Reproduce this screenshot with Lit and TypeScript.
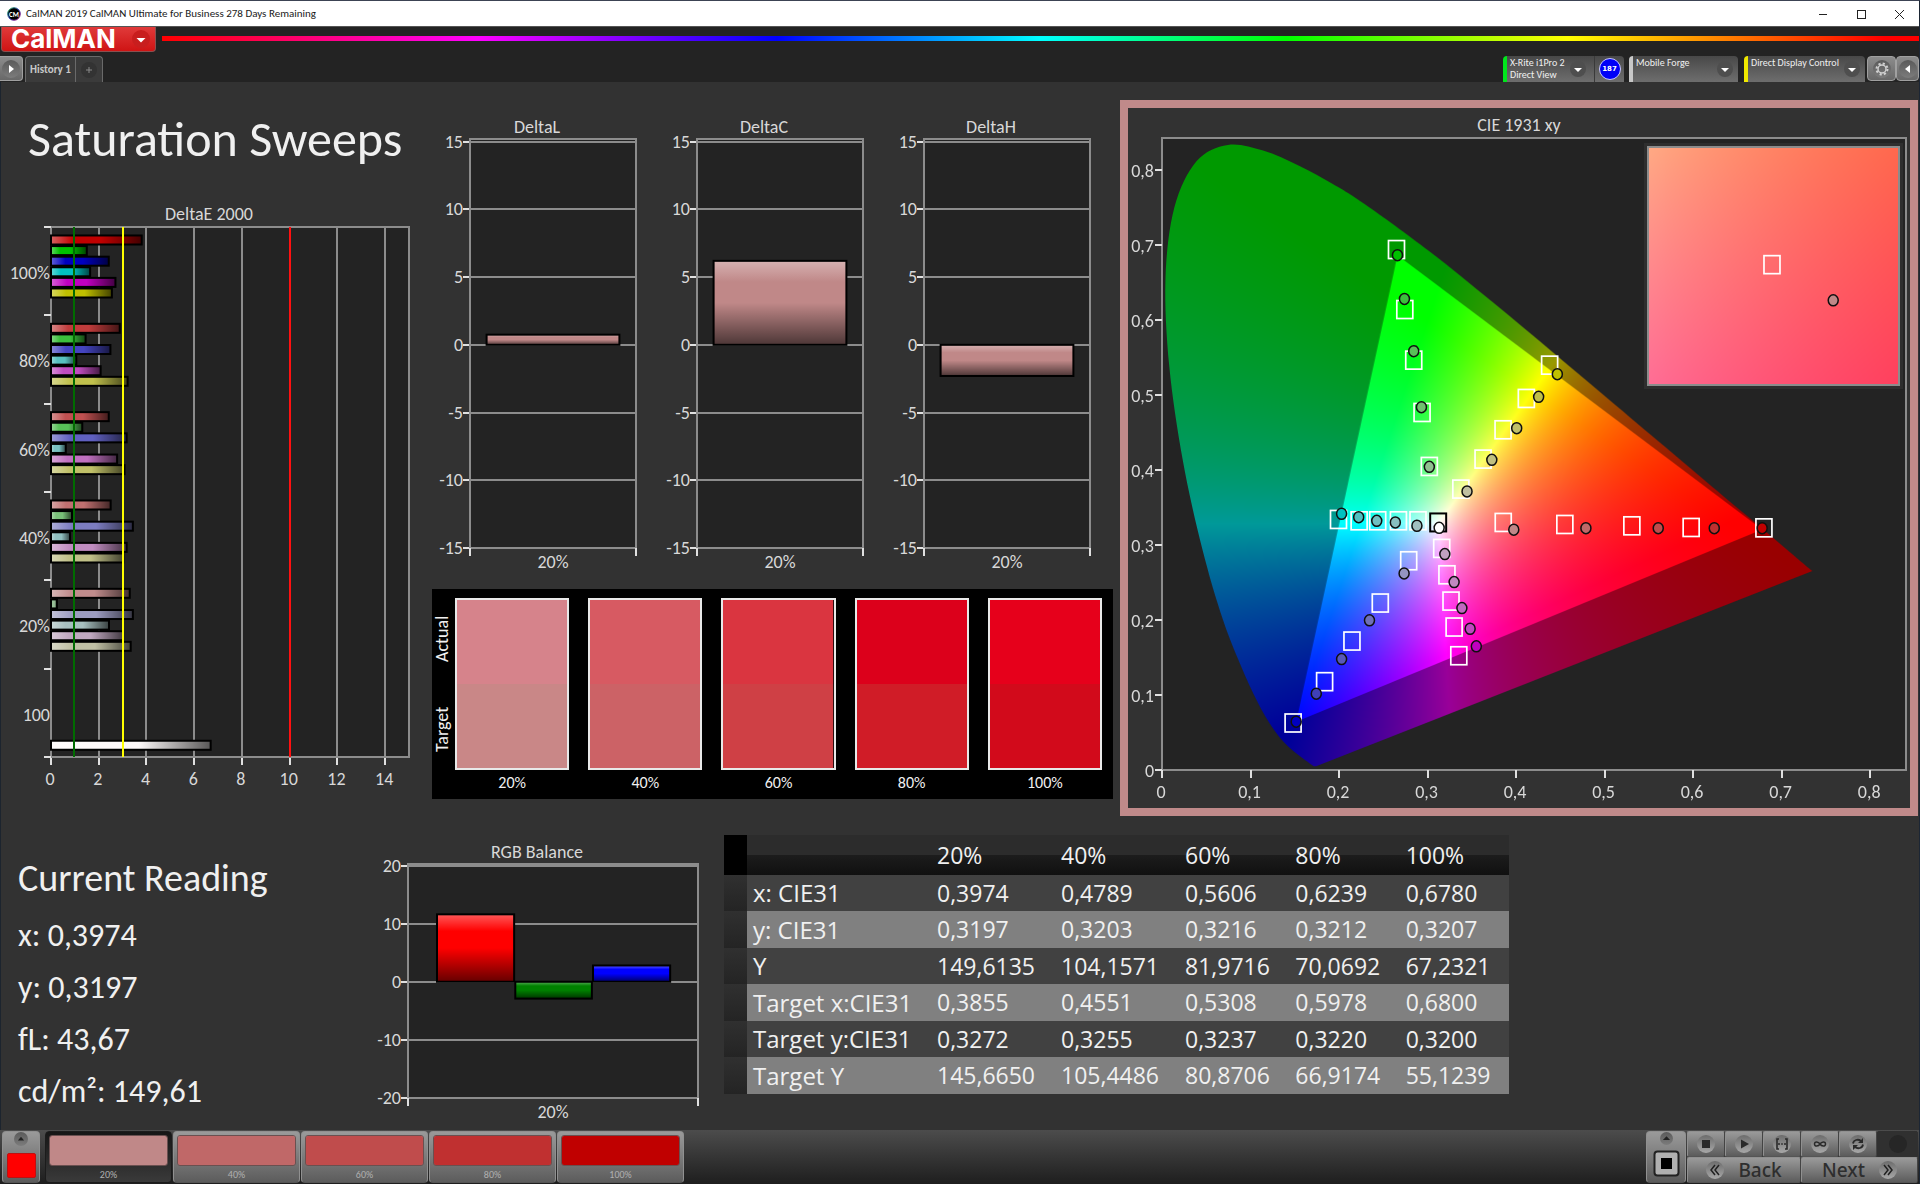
import { LitElement, html, svg, css } from "lit";
import { customElement, property } from "lit/decorators.js";

type Pair = [number, number];

const LEVELS = ["20%", "40%", "60%", "80%", "100%"];
const RED_TINTS = ["#c08888", "#c06868", "#c04c4c", "#c03030", "#c00000"];
const pc = (value: number, span: number) => `${(value / span) * 100}%`;

const chartStyles = css`
  svg.plot {
    display: block;
    width: 100%;
    height: 100%;
    overflow: visible;
  }
  .title {
    margin: 0;
    font-size: 18px;
    line-height: 22px;
    font-weight: 400;
    text-align: center;
    color: #d8d8d8;
  }
  .field {
    fill: #232323;
  }
  .grid,
  .frame {
    stroke: #8c8c8c;
    stroke-width: 2;
    fill: none;
    shape-rendering: crispEdges;
  }
  .tick {
    stroke: #e0e0e0;
    stroke-width: 2;
    shape-rendering: crispEdges;
  }
  .bar {
    stroke: #000;
    stroke-width: 2;
  }
  text {
    fill: #d8d8d8;
    font-size: 18px;
    dominant-baseline: central;
  }
  .end {
    text-anchor: end;
  }
  .mid {
    text-anchor: middle;
  }
`;

interface Bar {
  from: number;
  to: number;
  value: number;
  color: string;
}

/* Vertical bar chart with a symmetric value axis. */
@customElement("value-chart")
export class ValueChart extends LitElement {
  @property() heading = "";
  @property({ type: Number }) limit = 15;
  @property({ type: Number }) step = 5;
  @property({ attribute: false }) bars: Bar[] = [];

  static styles = [
    chartStyles,
    css`
      :host {
        display: flex;
        flex-direction: column;
        min-width: 0;
      }
      .area {
        flex: 1;
        min-height: 0;
        padding: 1px 0 27px 32px;
      }
    `,
  ];

  render() {
    const top = this.limit * 1.013;
    const span = top + this.limit;
    const y = (v: number) => pc(top - v, span);
    const ticks: number[] = [];
    for (let v = this.limit; v >= -this.limit; v -= this.step) ticks.push(v);
    return html`
      <h3 class="title">${this.heading}</h3>
      <div class="area">
        <svg class="plot" role="img" aria-label=${this.heading}>
          <defs>
            <linearGradient id="shade" x1="0" y1="0" x2="0" y2="1">
              <stop offset="0" stop-color="#fff" stop-opacity="0.35" />
              <stop offset="0.25" stop-color="#fff" stop-opacity="0" />
              <stop offset="0.5" stop-color="#000" stop-opacity="0" />
              <stop offset="1" stop-color="#000" stop-opacity="0.6" />
            </linearGradient>
          </defs>
          <rect class="field" width="100%" height="100%" />
          ${ticks.map(
            (v) => svg`
              <line class="grid" x1="0" x2="100%" y1=${y(v)} y2=${y(v)} />
              <line class="tick" x1="-7" x2="0" y1=${y(v)} y2=${y(v)} />
              <text class="end" x="-7" y=${y(v)}>${v}</text>`
          )}
          <rect class="frame" width="100%" height="100%" />
          ${this.bars.map((b) => {
            const a = y(Math.max(b.value, 0));
            const h = pc(Math.abs(b.value), span);
            const w = `${b.to - b.from}%`;
            return svg`
              <rect x="${b.from}%" y=${a} width=${w} height=${h} fill=${b.color} />
              <rect class="bar" x="${b.from}%" y=${a} width=${w} height=${h} fill="url(#shade)" />`;
          })}
          <svg y="100%" class="plot">
            <line class="tick" x1="0" x2="0" y1="0" y2="8" />
            <line class="tick" x1="100%" x2="100%" y1="0" y2="8" />
            <text class="mid" x="50%" y="14">20%</text>
          </svg>
        </svg>
      </div>
    `;
  }
}

const SWEEPS: { label: string; colors: string[]; values: number[] }[] = [
  {
    label: "100%",
    colors: ["#c00000", "#00c000", "#0000c0", "#00c0c0", "#c000c0", "#c0c000"],
    values: [3.8, 1.5, 2.42, 1.64, 2.7, 2.55],
  },
  {
    label: "80%",
    colors: ["#c03c3c", "#3cc03c", "#4444c0", "#58c0c0", "#c04cc0", "#c0c04c"],
    values: [2.88, 1.45, 2.49, 1.06, 2.08, 3.21],
  },
  {
    label: "60%",
    colors: ["#c05050", "#58c058", "#6060c0", "#78c0c0", "#c070c0", "#c0c068"],
    values: [2.42, 1.31, 3.17, 0.62, 2.77, 3.08],
  },
  {
    label: "40%",
    colors: ["#c07070", "#78c078", "#7c7cc0", "#90c0c0", "#c08cc0", "#c0c088"],
    values: [2.5, 0.88, 3.43, 0.8, 3.17, 3.03],
  },
  {
    label: "20%",
    colors: ["#c08c8c", "#98c098", "#9c9cc0", "#a8c0c0", "#c0a8c0", "#c0c0a4"],
    values: [3.3, 0.25, 3.43, 2.43, 3.02, 3.34],
  },
];

/* Horizontal DeltaE bars, one band per saturation level plus the white level. */
@customElement("delta-e-chart")
export class DeltaEChart extends LitElement {
  static styles = [
    chartStyles,
    css`
      :host {
        display: flex;
        flex-direction: column;
      }
      .title {
        padding-left: 8px;
      }
      .area {
        height: 530px;
        padding: 2px 0 34px 50px;
      }
      .limit {
        shape-rendering: crispEdges;
        stroke-width: 2;
      }
      .good {
        stroke: #006c00;
      }
      .warn {
        stroke: #ffff00;
      }
      .bad {
        stroke: #ff1010;
      }
    `,
  ];

  render() {
    const band = 100 / 6;
    const x = (v: number) => pc(v, 15);
    const bar = (b: number, slot: number, v: number, color: string) => {
      const top = `${band * b + 1.6 + slot * 2}%`;
      return svg`
        <rect y=${top} width=${x(v)} height="1.7%" fill=${color} />
        <rect class="bar" y=${top} width=${x(v)} height="1.7%" fill="url(#shade)" />`;
    };
    return html`
      <h3 class="title">DeltaE 2000</h3>
      <div class="area">
        <svg class="plot" role="img" aria-label="DeltaE 2000">
          <defs>
            <linearGradient id="shade">
              <stop offset="0" stop-color="#fff" stop-opacity="0.38" />
              <stop offset="0.25" stop-color="#fff" stop-opacity="0" />
              <stop offset="0.55" stop-color="#000" stop-opacity="0" />
              <stop offset="1" stop-color="#000" stop-opacity="0.65" />
            </linearGradient>
          </defs>
          <rect class="field" width="100%" height="100%" />
          ${[0, 2, 4, 6, 8, 10, 12, 14].map(
            (v) => svg`
              <line class="grid" x1=${x(v)} x2=${x(v)} y1="0" y2="100%" />
              <svg class="plot" x=${x(v)} y="100%">
                <line class="tick" x1="0" x2="0" y1="0" y2="8" />
                <text class="mid" x="-1" y="22">${v}</text>
              </svg>`
          )}
          <rect class="frame" width="100%" height="100%" />
          ${[0, 1, 2, 3, 4, 5, 6].map(
            (i) => svg`<line class="tick" x1="-7" x2="0" y1="${band * i}%" y2="${band * i}%" />`
          )}
          ${SWEEPS.map(
            (s, b) => svg`
              <text class="end" x="-1" y="${band * (b + 0.52)}%">${s.label}</text>
              ${s.values.map((v, i) => bar(b, i, v, s.colors[i]))}`
          )}
          <text class="end" x="-1" y="${band * 5.52}%">100</text>
          ${bar(5, 6, 6.69, "#fcf8f8")}
          <line class="limit good" x1=${x(0.97)} x2=${x(0.97)} y1="0" y2="100%" />
          <line class="limit warn" x1=${x(3)} x2=${x(3)} y1="0" y2="100%" />
          <line class="limit bad" x1=${x(10)} x2=${x(10)} y1="0" y2="100%" />
        </svg>
      </div>
    `;
  }
}

const LOCUS: Pair[] = [
  [0.1741, 0.005], [0.1714, 0.0051], [0.1689, 0.0069], [0.1644, 0.0109], [0.1566, 0.0177],
  [0.144, 0.0297], [0.1355, 0.0399], [0.1241, 0.0578], [0.1096, 0.0868], [0.0913, 0.1327],
  [0.0687, 0.2007], [0.0454, 0.295], [0.0235, 0.4127], [0.0082, 0.5384], [0.0039, 0.6548],
  [0.0139, 0.7502], [0.0389, 0.812], [0.0743, 0.8338], [0.1142, 0.8262], [0.1547, 0.8059],
  [0.1929, 0.7816], [0.2296, 0.7543], [0.3016, 0.6923], [0.3731, 0.6245], [0.4441, 0.5547],
  [0.5125, 0.4866], [0.5752, 0.4242], [0.627, 0.3725], [0.6658, 0.334], [0.6915, 0.3083],
  [0.719, 0.2809], [0.7347, 0.2653],
];
const GAMUT: Pair[] = [[0.678, 0.3207], [0.266, 0.6867], [0.1516, 0.0644]];

interface Sweep {
  targets: Pair[];
  readings: Pair[];
  colors: string[];
}

const CIE_SWEEPS: Sweep[] = [
  {
    targets: [[0.3855, 0.3302], [0.4551, 0.3275], [0.5308, 0.3257], [0.5978, 0.3235], [0.68, 0.323]],
    readings: [[0.3974, 0.3205], [0.4789, 0.3225], [0.5606, 0.3225], [0.6239, 0.3225], [0.678, 0.3225]],
    colors: RED_TINTS,
  },
  {
    targets: [[0.302, 0.4049], [0.2938, 0.4769], [0.2844, 0.5467], [0.2743, 0.6142], [0.2649, 0.6942]],
    readings: [[0.302, 0.4044], [0.2931, 0.484], [0.2844, 0.5587], [0.2739, 0.6284], [0.266, 0.6867]],
    colors: ["#90c090", "#70c070", "#58c058", "#3cc03c", "#00c000"],
  },
  {
    targets: [[0.2787, 0.2791], [0.2466, 0.2227], [0.2146, 0.172], [0.1837, 0.1178], [0.1481, 0.0627]],
    readings: [[0.2735, 0.2622], [0.2344, 0.1996], [0.2029, 0.148], [0.1743, 0.1018], [0.1516, 0.0644]],
    colors: ["#9494c0", "#7070b8", "#5858b8", "#4040b8", "#0000c0"],
  },
  {
    targets: [[0.2892, 0.3324], [0.2671, 0.3324], [0.2437, 0.3324], [0.2227, 0.3324], [0.1994, 0.3342]],
    readings: [[0.288, 0.3258], [0.2636, 0.3302], [0.2426, 0.3324], [0.2222, 0.3373], [0.2029, 0.3418]],
    colors: ["#a0c0c0", "#88c0c0", "#70c0c0", "#50c0c0", "#00c0c0"],
  },
  {
    targets: [[0.316, 0.2956], [0.3219, 0.2604], [0.3265, 0.2253], [0.33, 0.1907], [0.3353, 0.1524]],
    readings: [[0.3195, 0.288], [0.33, 0.2507], [0.3388, 0.216], [0.3481, 0.1884], [0.3551, 0.1649]],
    colors: ["#c0a0c0", "#c088c0", "#c068c0", "#c048c0", "#c000c0"],
  },
  {
    targets: [[0.3376, 0.3747], [0.3627, 0.4147], [0.3853, 0.4538], [0.4116, 0.4956], [0.4379, 0.54]],
    readings: [[0.3446, 0.3716], [0.3726, 0.4138], [0.4007, 0.456], [0.4255, 0.4978], [0.4466, 0.528]],
    colors: ["#c0c0a0", "#c0c080", "#c0c068", "#c0c048", "#c0c000"],
  },
];

const X_MAX = 0.8405;
const Y_MAX = 0.843;

/* Linear display colour of a chromaticity, scaled so its largest channel is full. */
function chroma(x: number, y: number): [number, number, number] {
  const z = 1 - x - y;
  const r = Math.max(0, 3.2406 * x - 1.5372 * y - 0.4986 * z);
  const g = Math.max(0, -0.9689 * x + 1.8758 * y + 0.0415 * z);
  const b = Math.max(0, 0.0557 * x - 0.204 * y + 1.057 * z);
  const k = 255 / Math.max(r, g, b, 0.0001);
  return [r * k, g * k, b * k];
}

/* CIE 1931 chromaticity diagram with target squares and reading dots. */
@customElement("cie-chart")
export class CieChart extends LitElement {
  static styles = [
    chartStyles,
    css`
      :host {
        display: block;
        border: 8px solid #c08a8a;
        background: #323232;
      }
      .title {
        padding-top: 6px;
      }
      .area {
        padding: 2px 4px 38px 34px;
      }
      .stack {
        position: relative;
        display: grid;
        height: 632px;
        background: #232323;
      }
      .stack > * {
        grid-area: 1 / 1;
        min-width: 0;
        min-height: 0;
      }
      canvas {
        display: block;
        width: 100%;
        height: 100%;
      }
      .inset {
        position: absolute;
        top: 8px;
        right: 6px;
        width: 34%;
        height: 38%;
        box-sizing: border-box;
        display: grid;
        border: 2px solid #8c8c8c;
        outline: 3px solid #2e2e2e;
      }
      .inset > * {
        grid-area: 1 / 1;
        min-width: 0;
        min-height: 0;
      }
      .target {
        fill: none;
        stroke: #fff;
        stroke-width: 1.7;
      }
      .dark {
        stroke: #000;
        stroke-width: 2;
      }
      .reading {
        stroke: #101010;
        stroke-width: 1.5;
      }
    `,
  ];

  firstUpdated() {
    const main = this.renderRoot.querySelector<HTMLCanvasElement>(".diagram")!;
    this.paint(main, 0, X_MAX, 0, Y_MAX, true);
    const inset = this.renderRoot.querySelector<HTMLCanvasElement>(".closeup")!;
    this.paint(inset, 0.3612, 0.41, 0.302, 0.352, false);
  }

  private paint(el: HTMLCanvasElement, x0: number, x1: number, y0: number, y1: number, masked: boolean) {
    const w = el.width;
    const h = el.height;
    const layer = (dim: number) => {
      const c = document.createElement("canvas");
      c.width = w;
      c.height = h;
      const ctx = c.getContext("2d")!;
      const img = ctx.createImageData(w, h);
      for (let j = 0; j < h; j++) {
        for (let i = 0; i < w; i++) {
          const rgb = chroma(x0 + ((i + 0.5) / w) * (x1 - x0), y1 - ((j + 0.5) / h) * (y1 - y0));
          const o = (j * w + i) * 4;
          for (let n = 0; n < 3; n++) img.data[o + n] = rgb[n] * dim;
          img.data[o + 3] = 255;
        }
      }
      ctx.putImageData(img, 0, 0);
      return c;
    };
    const ctx = el.getContext("2d")!;
    if (!masked) {
      ctx.drawImage(layer(1), 0, 0);
      return;
    }
    const at = ([x, y]: Pair): Pair => [((x - x0) / (x1 - x0)) * w, ((y1 - y) / (y1 - y0)) * h];
    const p = LOCUS.map(at);
    ctx.save();
    ctx.beginPath();
    ctx.moveTo(...p[0]);
    for (let i = 0; i < p.length - 1; i++) {
      const a = p[Math.max(i - 1, 0)];
      const b = p[i];
      const c = p[i + 1];
      const d = p[Math.min(i + 2, p.length - 1)];
      ctx.bezierCurveTo(
        b[0] + (c[0] - a[0]) / 6, b[1] + (c[1] - a[1]) / 6,
        c[0] - (d[0] - b[0]) / 6, c[1] - (d[1] - b[1]) / 6,
        c[0], c[1]
      );
    }
    ctx.closePath();
    ctx.clip();
    ctx.drawImage(layer(0.6), 0, 0);
    const [r, g, b] = GAMUT.map(at);
    ctx.beginPath();
    ctx.moveTo(...r);
    ctx.lineTo(...g);
    ctx.lineTo(...b);
    ctx.closePath();
    ctx.clip();
    ctx.drawImage(layer(1), 0, 0);
    ctx.restore();
  }

  private square([x, y]: Pair, dark = false) {
    return svg`<svg class="plot" x=${pc(x, X_MAX)} y=${pc(Y_MAX - y, Y_MAX)}>
      <rect class=${dark ? "target dark" : "target"} x="-8" y="-9" width="16" height="18" /></svg>`;
  }

  private dot([x, y]: Pair, color: string) {
    return svg`<svg class="plot" x=${pc(x, X_MAX)} y=${pc(Y_MAX - y, Y_MAX)}>
      <ellipse class="reading" rx="5" ry="5.5" fill=${color} /></svg>`;
  }

  render() {
    const steps = [0, 1, 2, 3, 4, 5, 6, 7, 8];
    const name = (n: number) => (n === 0 ? "0" : `0,${n}`);
    return html`
      <h3 class="title">CIE 1931 xy</h3>
      <div class="area">
        <div class="stack">
          <canvas class="diagram" width="745" height="632"></canvas>
          <svg class="plot" role="img" aria-label="CIE 1931 xy">
            <rect class="frame" width="100%" height="100%" />
            ${steps.map(
              (n) => svg`
                <svg class="plot" x=${pc(n / 10, X_MAX)} y="100%">
                  <line class="tick" x1="0" x2="0" y1="0" y2="8" />
                  <text class="mid" x="-1" y="22">${name(n)}</text>
                </svg>
                <svg class="plot" y=${pc(Y_MAX - n / 10, Y_MAX)}>
                  <line class="tick" x1="-7" x2="0" y1="0" y2="0" />
                  <text class="end" x="-8" y="1">${name(n)}</text>
                </svg>`
            )}
            ${this.square([0.312, 0.3302], true)}
            ${CIE_SWEEPS.map((s) => s.targets.map((t) => this.square(t)))}
            ${CIE_SWEEPS.map((s) => s.readings.map((r, i) => this.dot(r, s.colors[i])))}
            ${this.dot([0.3131, 0.3231], "#ffffff")}
          </svg>
          <div class="inset">
            <canvas class="closeup" width="250" height="236"></canvas>
            <svg class="plot">
              <svg class="plot" x="49.4%" y="49.4%">
                <rect class="target" x="-8" y="-9" width="16" height="18" />
              </svg>
              <svg class="plot" x="74%" y="64.5%">
                <ellipse class="reading" rx="5" ry="5.5" fill="#c08888" />
              </svg>
            </svg>
          </div>
        </div>
      </div>
    `;
  }
}

const COMPARE = [
  { actual: "#d6838b", target: "#c98787" },
  { actual: "#d75a62", target: "#cc6266" },
  { actual: "#da3540", target: "#cf4045" },
  { actual: "#dc001b", target: "#d01c27" },
  { actual: "#e6001b", target: "#d20a1b" },
];

const TABLE: { name: string; values: string[] }[] = [
  { name: "x: CIE31", values: ["0,3974", "0,4789", "0,5606", "0,6239", "0,6780"] },
  { name: "y: CIE31", values: ["0,3197", "0,3203", "0,3216", "0,3212", "0,3207"] },
  { name: "Y", values: ["149,6135", "104,1571", "81,9716", "70,0692", "67,2321"] },
  { name: "Target x:CIE31", values: ["0,3855", "0,4551", "0,5308", "0,5978", "0,6800"] },
  { name: "Target y:CIE31", values: ["0,3272", "0,3255", "0,3237", "0,3220", "0,3200"] },
  { name: "Target Y", values: ["145,6650", "105,4486", "80,8706", "66,9174", "55,1239"] },
];

const caret = svg`<svg class="round" viewBox="0 0 18 18" aria-hidden="true"><path d="M4.500 8h9l-4.500 4.500z" fill="#fff"/></svg>`;
const icons = {
  stop: svg`<rect x="5" y="5" width="8" height="8" fill="#2a2a2a"/>`,
  play: svg`<path d="M6 4.500l8 4.500-8 4.500z" fill="#2a2a2a"/>`,
  range: svg`<path d="M6 4H4v10h2M12 4h2v10h-2" fill="none" stroke="#2a2a2a" stroke-width="1.600"/><path d="M5 9h2M8.200 9h1.600M11 9h2" stroke="#2a2a2a" stroke-width="1.600"/>`,
  loop: svg`<path d="M9 9C7.500 6.500 3.500 6 3.500 9s4 2.500 5.500 0 5.500-3 5.500 0S10.500 11.500 9 9z" fill="none" stroke="#2a2a2a" stroke-width="1.500"/>`,
  cycle: svg`<path d="M4 8.500C4.500 5 9 3.500 12 6M14 9.500C13.500 13 9 14.500 6 12" fill="none" stroke="#2a2a2a" stroke-width="1.800"/><path d="M14 3v5h-5zM4 15v-5h5z" fill="#2a2a2a"/>`,
};

@customElement("app-root")
export class AppRoot extends LitElement {
  static styles = css`
    :host {
      display: flex;
      flex-direction: column;
      min-height: 100vh;
      box-sizing: border-box;
      border-top: 1px solid #3c4354;
      border-right: 1px solid #1c2634;
      background: #323232;
      color: #f0f0f0;
      font-family: Carlito, Lato, "Open Sans", sans-serif;
    }
    * {
      box-sizing: border-box;
    }
    button {
      margin: 0;
      padding: 0;
      border: 0;
      font: inherit;
      color: inherit;
      background: none;
      cursor: pointer;
    }
    h1,
    h2,
    p {
      margin: 0;
      font-weight: 400;
    }

    .titlebar {
      display: flex;
      align-items: center;
      height: 25px;
      padding: 0 1px 0 7px;
      background: #fff;
      color: #1a1a1a;
      font-size: 11px;
    }
    .app-icon {
      width: 14px;
      height: 14px;
      margin-right: 5px;
    }
    .caption {
      flex: 1;
    }
    .win {
      width: 38px;
      height: 25px;
    }
    .win svg {
      display: block;
      margin: auto;
      width: 12px;
      height: 12px;
    }

    .brandbar {
      display: flex;
      background: #232323;
      border-top: 1px solid #555;
      height: 30px;
    }
    .brand {
      display: flex;
      align-items: center;
      justify-content: space-between;
      width: 155px;
      height: 25px;
      margin-left: 1px;
      padding: 0 5px 0 9px;
      background: linear-gradient(#e03a3a, #cf1414);
      border: 1px solid #8a5050;
      border-top: 0;
      border-radius: 0 0 4px 4px;
      color: #fff;
      font-family: Inter, sans-serif;
      font-size: 26px;
      line-height: 24px;
      font-weight: 700;
    }
    .brand .round {
      background: #c81e1e;
    }
    .rainbow {
      flex: 1;
      height: 5px;
      margin: 9px 0 0 6px;
      background: linear-gradient(90deg, #f00, #f0f 18%, #00f 35%, #0ff 50%, #0f0 64%, #ff0 80%, #f00 98%);
    }

    .tabbar {
      display: flex;
      align-items: flex-start;
      height: 26px;
      background: #232323;
    }
    .round {
      display: block;
      flex: none;
      width: 18px;
      height: 18px;
      border-radius: 50%;
      background: linear-gradient(#5a5a5a, #7c7c7c);
    }
    .square-btn {
      display: flex;
      align-items: center;
      justify-content: center;
      width: 23px;
      height: 25px;
      border: 1px solid #a0a0a0;
      border-radius: 4px;
      background: linear-gradient(#8c8c8c, #686868);
    }
    .play-btn {
      border-left: 0;
      border-radius: 0 4px 4px 0;
    }
    .gear-btn {
      width: 29px;
      margin-left: 2px;
    }
    .tab {
      height: 26px;
      padding: 0 4px;
      background: #3b3b3b;
      border: 1px solid #6a6a6a;
      border-bottom: 0;
      border-radius: 4px 0 0 0;
      color: #c8c8c8;
      font-size: 11px;
      font-weight: 700;
      white-space: nowrap;
    }
    .history {
      width: 51px;
      margin-left: 2px;
    }
    .add {
      width: 28px;
      margin-left: -1px;
      border-radius: 0 4px 0 0;
    }
    .add .round {
      margin: auto;
      background: #333;
      width: 16px;
      height: 16px;
    }
    .spacer {
      flex: 1;
    }
    .device {
      display: flex;
      height: 26px;
      padding: 0 5px 0 3px;
      border-left: 4px solid #00e61c;
      border-radius: 4px 4px 0 0;
      background: linear-gradient(#484848, #6e6e6e);
      color: #f0f0f0;
      font-size: 10px;
      line-height: 12px;
      text-align: left;
      align-items: center;
      justify-content: space-between;
    }
    .device .names {
      align-self: flex-start;
      padding-top: 1px;
      white-space: nowrap;
    }
    .device .round {
      background: #4e4e4e;
      width: 16px;
      height: 16px;
    }
    .meter {
      width: 91px;
      padding-right: 8px;
      border-radius: 4px 0 0 0;
    }
    .count {
      display: flex;
      align-items: center;
      justify-content: center;
      width: 30px;
      height: 26px;
      border-left: 1px solid #3a3a3a;
      background: linear-gradient(#484848, #6e6e6e);
      border-radius: 0 4px 0 0;
    }
    .badge {
      width: 22px;
      height: 22px;
      border-radius: 50%;
      border: 1px solid #c8c8ff;
      background: #0000f8;
      color: #fff;
      font-family: "DejaVu Sans", sans-serif;
      font-weight: 700;
      font-size: 7px;
      line-height: 20px;
      text-align: center;
    }
    .source {
      width: 109px;
      margin-left: 5px;
      border-left-color: #c8c8c8;
    }
    .display {
      width: 121px;
      margin-left: 6px;
      border-left-color: #f0e800;
    }

    main {
      flex: 1;
      display: flex;
      flex-direction: column;
      border-left: 1px solid #1c242e;
    }
    .upper {
      display: grid;
      grid-template-columns: minmax(0, 424fr) minmax(0, 681fr) minmax(0, 798fr);
      gap: 7px;
      padding: 18px 1px 0 0;
    }
    .sweeps h1 {
      padding: 0 0 0 27px;
      font-size: 50px;
      line-height: 78px;
      white-space: nowrap;
    }
    .sweeps delta-e-chart {
      padding: 25px 16px 0 0;
    }
    .deltas {
      display: grid;
      grid-template-columns: repeat(3, minmax(0, 1fr));
      gap: 29px;
      padding: 16px 23px 0 6px;
      height: 475px;
    }
    .compare {
      display: flex;
      gap: 4px;
      margin-top: 14px;
      padding: 9px 11px 4px 1px;
      background: #000;
    }
    .pairs {
      flex: 1;
      display: grid;
      grid-template-columns: repeat(5, minmax(0, 1fr));
      gap: 19px;
    }
    .sides {
      display: flex;
      flex-direction: column;
      gap: 10px;
      width: 18px;
      height: 172px;
      font-size: 18px;
      line-height: 18px;
    }
    .sides span {
      flex: 1;
      writing-mode: vertical-rl;
      transform: rotate(180deg);
      text-align: center;
    }
    .swatch {
      margin: 0;
      text-align: center;
      font-size: 16px;
      line-height: 25px;
    }
    .swatch svg {
      display: block;
      width: 100%;
      height: 172px;
      border: 2px solid #e8e8e8;
    }

    .lower {
      display: grid;
      grid-template-columns: minmax(0, 375fr) minmax(0, 322fr) minmax(0, 1221fr);
      padding-top: 17px;
    }
    .reading {
      padding: 19px 0 0 17px;
    }
    .reading h2 {
      font-size: 38px;
      line-height: 52px;
      margin-bottom: 6px;
    }
    .reading p {
      font-size: 32px;
      line-height: 52px;
    }
    .balance {
      height: 292px;
      padding: 8px 0 0 0;
    }

    table {
      margin: 2px 0 0 26px;
      border-collapse: collapse;
      align-self: start;
      justify-self: start;
      table-layout: fixed;
      width: 785px;
      font-family: "Open Sans", sans-serif;
      font-size: 23px;
      line-height: 30px;
    }
    th,
    td {
      padding: 3px 0 3px 7px;
      font-weight: 400;
      text-align: left;
      white-space: nowrap;
    }
    tbody th {
      padding-left: 6px;
      font-size: 24px;
    }
    thead th {
      height: 40px;
    }
    thead tr {
      background: linear-gradient(#2c2c2c 50%, #1c1c1c 51%, #101010);
    }
    .corner {
      width: 23px;
      padding: 0;
      background: #000;
    }
    tbody .edge {
      padding: 0;
      background: linear-gradient(#303030, #242424);
    }
    tbody tr {
      background: #414141;
    }
    tbody tr:nth-child(even) {
      background: #808080;
      line-height: 31px;
    }
    .c-name {
      width: 183px;
    }
    .c-wide {
      width: 124px;
    }

    footer {
      display: flex;
      align-items: flex-start;
      height: 54px;
      padding: 1px 1px 0 2px;
      background: linear-gradient(#4c4c4c, #1e1e1e);
    }
    .metal {
      border: 1px solid #909090;
      border-bottom-color: #555;
      border-radius: 4px;
      background: linear-gradient(#9a9a9a, #5c5c5c);
    }
    .color-btn {
      display: flex;
      flex-direction: column;
      align-items: center;
      width: 38px;
      height: 52px;
      margin-right: 5px;
    }
    .color-btn .round {
      width: 14px;
      height: 14px;
      margin: 0 0 7px;
    }
    .color {
      width: 29px;
      height: 25px;
      border-radius: 2px;
      background: #ff0000;
      border: 1px solid #c01010;
    }
    .level {
      width: 127px;
      height: 52px;
      margin-right: 1px;
      padding: 3px 3px 0;
      color: #b0b0b0;
      font-size: 10px;
      line-height: 18px;
    }
    .level svg {
      display: block;
      width: 100%;
      height: 31px;
      border: 1px solid #6a5050;
      border-radius: 3px;
    }
    .level[aria-pressed="true"] {
      border-color: #1c1c1c;
      background: linear-gradient(#161616, #3a3a3a);
    }
    .mode {
      display: flex;
      flex-direction: column;
      align-items: center;
      width: 40px;
      height: 52px;
      margin-right: 1px;
    }
    .mode .round {
      width: 13px;
      height: 13px;
      margin-bottom: 5px;
    }
    .mode .frame {
      display: block;
      width: 27px;
      height: 27px;
    }
    .transport {
      display: grid;
      grid-template-columns: repeat(5, 38px) 41px;
    }
    .key {
      display: flex;
      align-items: center;
      justify-content: center;
      height: 26px;
      border-radius: 2px;
      border-right-color: #444;
    }
    .key .round {
      background: linear-gradient(#6c6c6c, #a8a8a8);
      width: 18px;
      height: 18px;
    }
    .idle {
      border-color: #303030;
      background: #303030;
    }
    .idle .round {
      background: #262626;
    }
    .nav {
      grid-column: span 3;
      gap: 14px;
      color: #2e2e2e;
      font-family: "Noto Sans", sans-serif;
      font-size: 19px;
      line-height: 20px;
      font-weight: 500;
    }
  `;

  render() {
    return html`
      <header>
        <div class="titlebar">
          <svg class="app-icon" viewBox="0 0 14 14" aria-hidden="true">
            <defs>
              <linearGradient id="ring" x1="0" y1="0" x2="1" y2="1">
                <stop offset="0" stop-color="#20c040" />
                <stop offset="0.5" stop-color="#3040d0" />
                <stop offset="1" stop-color="#d03080" />
              </linearGradient>
            </defs>
            <circle cx="7" cy="7" r="6.300" fill="#000" stroke="url(#ring)" />
            <text x="7" y="9.500" font-size="7" font-weight="700" text-anchor="middle" fill="#fff">CM</text>
          </svg>
          <span class="caption">CalMAN 2019 CalMAN Ultimate for Business 278 Days Remaining</span>
          <button class="win" aria-label="Minimize">
            <svg viewBox="0 0 12 12"><path d="M2 6.500h8" stroke="#222" /></svg>
          </button>
          <button class="win" aria-label="Maximize">
            <svg viewBox="0 0 12 12"><rect x="2.500" y="2.500" width="8" height="8" fill="none" stroke="#222" /></svg>
          </button>
          <button class="win" aria-label="Close">
            <svg viewBox="0 0 12 12"><path d="M2 2l9 9M11 2l-9 9" stroke="#222" /></svg>
          </button>
        </div>
        <div class="brandbar">
          <button class="brand" aria-haspopup="menu">CalMAN ${caret}</button>
          <div class="rainbow"></div>
        </div>
        <nav class="tabbar">
          <button class="square-btn play-btn" aria-label="Show workflow">
            <svg class="round" viewBox="0 0 18 18"><path d="M7 5l5 4-5 4z" fill="#fff" /></svg>
          </button>
          <button class="tab history">History 1</button>
          <button class="tab add" aria-label="Add history">
            <svg class="round" viewBox="0 0 16 16"><path d="M8 5v6M5 8h6" stroke="#8a8a8a" /></svg>
          </button>
          <span class="spacer"></span>
          <button class="device meter" aria-haspopup="menu">
            <span class="names">X-Rite i1Pro 2<br />Direct View</span>${caret}
          </button>
          <span class="count"><span class="badge">187</span></span>
          <button class="device source" aria-haspopup="menu"><span class="names">Mobile Forge</span>${caret}</button>
          <button class="device display" aria-haspopup="menu">
            <span class="names">Direct Display Control</span>${caret}
          </button>
          <button class="square-btn gear-btn" aria-label="Settings">
            <svg class="round" viewBox="0 0 18 18">
              <circle cx="9" cy="9" r="5.500" fill="none" stroke="#d0d0d0" stroke-width="2" stroke-dasharray="2.200 2.120" />
              <circle cx="9" cy="9" r="4" fill="none" stroke="#d0d0d0" stroke-width="1.500" />
            </svg>
          </button>
          <button class="square-btn" aria-label="Collapse panel">
            <svg class="round" viewBox="0 0 18 18"><path d="M11 5l-5 4 5 4z" fill="#fff" /></svg>
          </button>
        </nav>
      </header>

      <main>
        <section class="upper">
          <div class="sweeps">
            <h1>Saturation Sweeps</h1>
            <delta-e-chart></delta-e-chart>
          </div>
          <div>
            <div class="deltas">
              <value-chart heading="DeltaL" .bars=${[{ from: 10, to: 90, value: 0.75, color: "#c08888" }]}></value-chart>
              <value-chart heading="DeltaC" .bars=${[{ from: 10, to: 90, value: 6.2, color: "#c08888" }]}></value-chart>
              <value-chart heading="DeltaH" .bars=${[{ from: 10, to: 90, value: -2.3, color: "#c08888" }]}></value-chart>
            </div>
            <div class="compare">
              <div class="sides"><span>Actual</span><span>Target</span></div>
              <div class="pairs">
                ${COMPARE.map(
                  (c, i) => html`<figure class="swatch">
                    <svg aria-hidden="true">
                      <rect width="100%" height="50%" fill=${c.actual} />
                      <rect y="50%" width="100%" height="50%" fill=${c.target} />
                    </svg>
                    <figcaption>${LEVELS[i]}</figcaption>
                  </figure>`
                )}
              </div>
            </div>
          </div>
          <cie-chart></cie-chart>
        </section>

        <section class="lower">
          <div class="reading">
            <h2>Current Reading</h2>
            <p>x: 0,3974</p>
            <p>y: 0,3197</p>
            <p>fL: 43,67</p>
            <p>cd/m²: 149,61</p>
          </div>
          <value-chart
            class="balance"
            heading="RGB Balance"
            limit="20"
            step="10"
            .bars=${[
              { from: 10, to: 36.6, value: 11.6, color: "#ff0000" },
              { from: 37, to: 63.4, value: -2.9, color: "#008000" },
              { from: 63.8, to: 90.4, value: 2.8, color: "#0000ff" },
            ]}
          ></value-chart>
          <table>
            <colgroup>
              <col class="corner" /><col class="c-name" /><col class="c-wide" /><col class="c-wide" /><col /><col /><col />
            </colgroup>
            <thead>
              <tr>
                <th class="corner"></th>
                <th></th>
                ${LEVELS.map((l) => html`<th scope="col">${l}</th>`)}
              </tr>
            </thead>
            <tbody>
              ${TABLE.map(
                (r) => html`<tr>
                  <td class="edge"></td>
                  <th scope="row">${r.name}</th>
                  ${r.values.map((v) => html`<td>${v}</td>`)}
                </tr>`
              )}
            </tbody>
          </table>
        </section>
      </main>

      <footer>
        <button class="metal color-btn" aria-label="Choose color">
          <svg class="round" viewBox="0 0 18 18"><path d="M5 11h8l-4-5z" fill="#222" /></svg>
          <span class="color"></span>
        </button>
        ${LEVELS.map(
          (l, i) => html`<button class="metal level" aria-pressed=${i === 0 ? "true" : "false"}>
            <svg aria-hidden="true"><rect width="100%" height="100%" fill=${RED_TINTS[i]} /></svg>
            ${l}
          </button>`
        )}
        <span class="spacer"></span>
        <button class="metal mode" aria-label="Pattern window">
          <svg class="round" viewBox="0 0 18 18"><path d="M4 11h10l-5-5z" fill="#222" /></svg>
          <svg class="frame" viewBox="0 0 27 27">
            <rect x="1.500" y="1.500" width="24" height="24" rx="3" fill="#b0b0b0" stroke="#222" stroke-width="2" />
            <rect x="8" y="8" width="11" height="11" fill="#000" />
          </svg>
        </button>
        <div class="transport">
          ${Object.entries(icons).map(
            ([name, icon]) => html`<button class="metal key" aria-label=${name}>
              <svg class="round" viewBox="0 0 18 18">${icon}</svg>
            </button>`
          )}
          <button class="metal key idle" aria-label="Record" disabled>
            <svg class="round" viewBox="0 0 18 18"></svg>
          </button>
          <button class="metal key nav">
            <svg class="round" viewBox="0 0 18 18"><path d="M9 4L5 9l4 5M13 4L9 9l4 5" fill="none" stroke="#222" stroke-width="1.500" /></svg>
            Back
          </button>
          <button class="metal key nav">
            Next
            <svg class="round" viewBox="0 0 18 18"><path d="M5 4l4 5-4 5M9 4l4 5-4 5" fill="none" stroke="#222" stroke-width="1.500" /></svg>
          </button>
        </div>
      </footer>
    `;
  }
}
